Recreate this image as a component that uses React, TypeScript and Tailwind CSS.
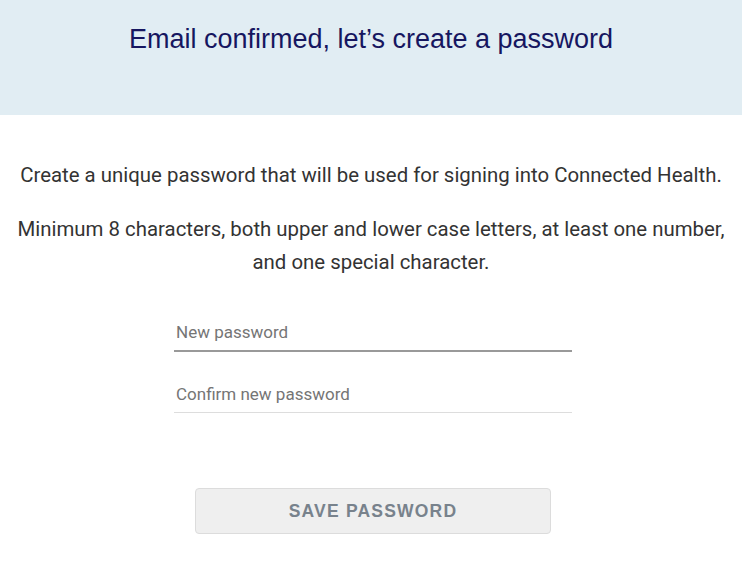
import { useState } from 'react';

export default function App() {
  const [password, setPassword] = useState('');
  const [confirm, setConfirm] = useState('');

  return (
    <div className="min-h-screen bg-white">
      <header className="h-[115px] bg-[#e1edf3] flex justify-center pt-[23px]">
        <h1
          className="text-[27px] leading-[32px] text-[#161660]"
          style={{ fontFamily: '"Liberation Sans", Arial, sans-serif' }}
        >
          Email confirmed, let’s create a password
        </h1>
      </header>

      <main
        className="flex flex-col items-center text-[#333] pt-[45px]"
        style={{ fontFamily: 'Roboto, "Noto Sans", sans-serif' }}
      >
        <p className="text-[20.4px] leading-[30px] text-center whitespace-nowrap">
          Create a unique password that will be used for signing into Connected Health.
        </p>
        <p className="text-[20.4px] leading-[33px] text-center mt-[23px] whitespace-nowrap">
          Minimum 8 characters, both upper and lower case letters, at least one number,
          <br />
          and one special character.
        </p>

        <div className="w-[398px] ml-[4px] mt-[35px] flex flex-col">
          <input
            type="password"
            autoFocus
            value={password}
            onChange={(e) => setPassword(e.target.value)}
            placeholder="New password"
            className="h-[38px] px-[2px] text-[17px] text-[#333] placeholder:text-[#757575] border-b-2 border-[#999] outline-none bg-transparent"
          />
          <input
            type="password"
            value={confirm}
            onChange={(e) => setConfirm(e.target.value)}
            placeholder="Confirm new password"
            className="h-[38px] mt-[23px] px-[2px] text-[17px] text-[#333] placeholder:text-[#757575] border-b border-[#ddd] outline-none bg-transparent"
          />
        </div>

        <button
          className="mt-[75px] ml-[4px] w-[356px] h-[46px] bg-[#efefef] border border-[#dcdcdc] rounded-[4px] text-[17.5px] font-bold tracking-[1.2px] text-[#78828c]"
          style={{ fontFamily: '"Liberation Sans", Arial, sans-serif' }}
        >
          SAVE PASSWORD
        </button>
      </main>
    </div>
  );
}
